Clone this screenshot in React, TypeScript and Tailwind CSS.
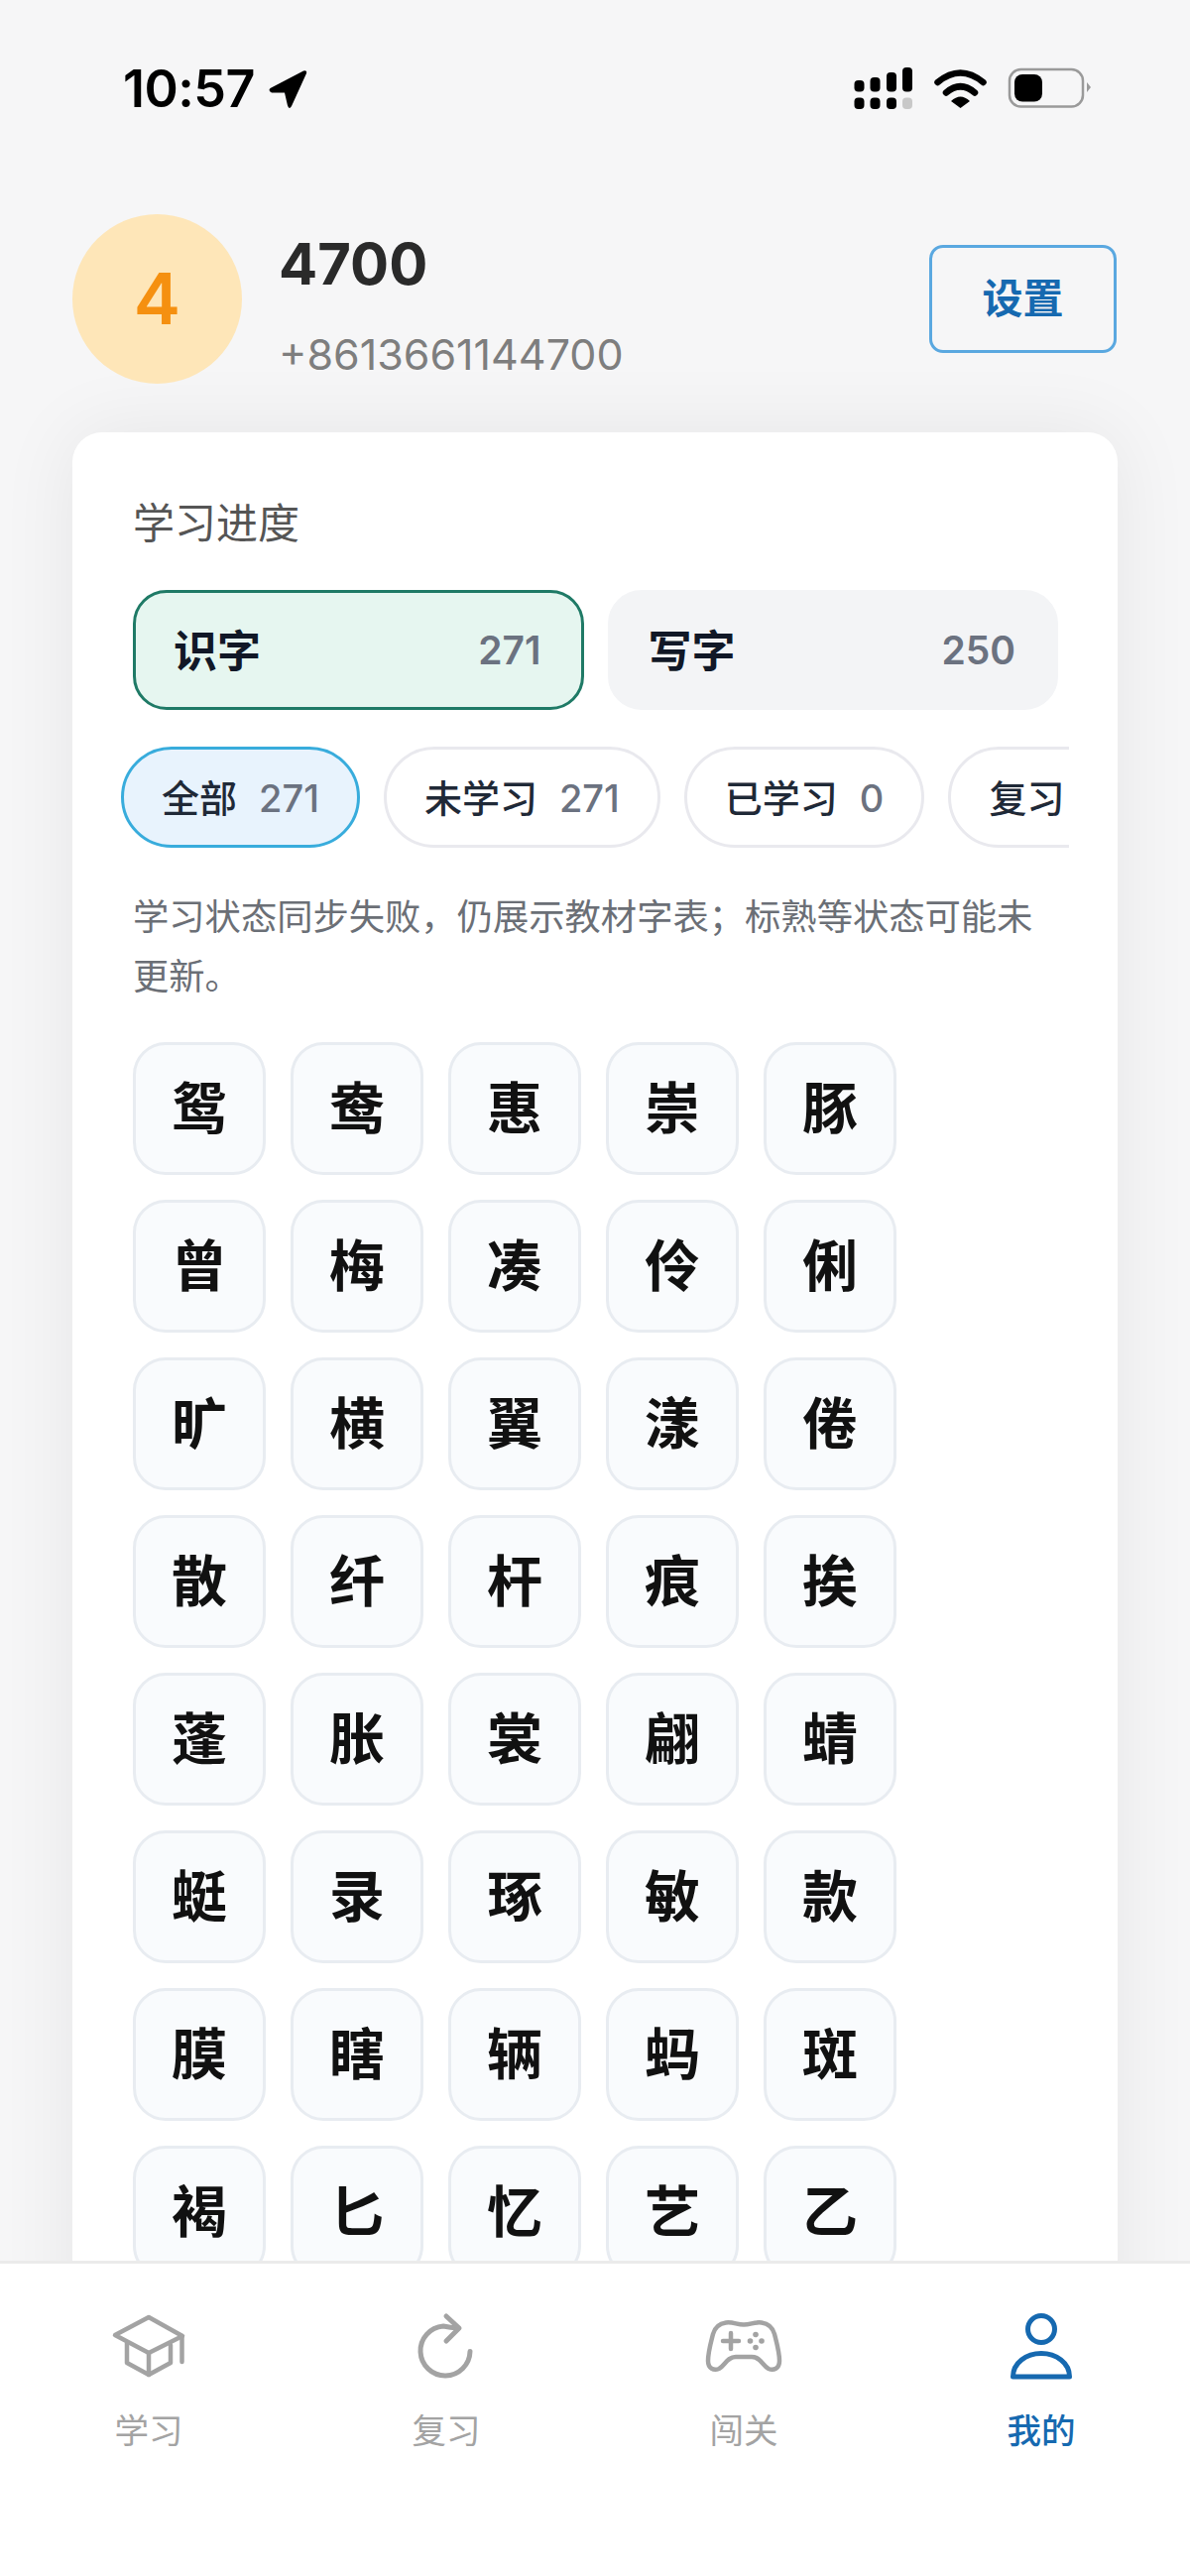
const FONT = "font-['Inter','Noto_Sans_CJK_SC',sans-serif]";

const ROWS = [
  ["鸳", "鸯", "惠", "崇", "豚"],
  ["曾", "梅", "凑", "伶", "俐"],
  ["旷", "横", "翼", "漾", "倦"],
  ["散", "纤", "杆", "痕", "挨"],
  ["蓬", "胀", "裳", "翩", "蜻"],
  ["蜓", "录", "琢", "敏", "款"],
  ["膜", "瞎", "辆", "蚂", "斑"],
  ["褐", "匕", "忆", "艺", "乙"],
];

function Signal() {
  const cols = [41.5, 57.5, 74, 90];
  const tops = [41, 38, 33, 28];
  return (
    <svg width="245" height="50" viewBox="40 25 245 50" aria-hidden="true">
      {cols.map((x, i) => (
        <g key={x}>
          <rect x={x} y={tops[i]} width="10" height={52.5 - tops[i]} rx="4" fill="#000" />
          <rect x={x} y="58.5" width="10" height="11.5" rx="4" fill={i === 3 ? "#c8c8c8" : "#000"} />
        </g>
      ))}
      <path d="M125.5 43 Q148.5 24 171.5 43" fill="none" stroke="#000" strokeWidth="6.5" strokeLinecap="round" />
      <path d="M134 53.5 Q148.5 41 163 53.5" fill="none" stroke="#000" strokeWidth="6.5" strokeLinecap="round" />
      <path d="M139 62 Q148.5 53 158 62 L148.5 69 Z" fill="#000" />
      <rect x="198" y="30" width="74" height="37.5" rx="11.5" fill="none" stroke="#9a9a9a" strokeWidth="2.5" />
      <rect x="203" y="35" width="28" height="27.5" rx="8" fill="#000" />
      <path d="M276 43 L280 48 L276 53 Z" fill="#9a9a9a" />
    </svg>
  );
}

function CapIcon() {
  return (
    <svg width="100" height="100" viewBox="0 0 100 100" fill="none" stroke="#a3a3a3" strokeWidth="4.5" strokeLinejoin="round" strokeLinecap="round" aria-hidden="true">
      <path d="M16 35 L50 17 L84 36 L50 53 Z" />
      <path d="M28 43 V63 L50 75 L72 63 V45" />
      <path d="M50 53 V75" />
      <path d="M83.5 37 V62" />
    </svg>
  );
}

function ReviewIcon() {
  return (
    <svg width="100" height="100" viewBox="0 0 100 100" fill="none" stroke="#a3a3a3" strokeWidth="5" strokeLinejoin="round" strokeLinecap="round" aria-hidden="true">
      <path d="M74 51.5 A25 25 0 1 1 47 26 Q54 27.5 62 28" />
      <path d="M50 16 L63 28 L50 41" />
    </svg>
  );
}

function PadIcon() {
  return (
    <svg width="100" height="100" viewBox="0 0 100 100" fill="none" stroke="#a3a3a3" strokeWidth="4.5" strokeLinejoin="round" strokeLinecap="round" aria-hidden="true">
      <path d="M32 22.5 C39 21.5 43 24.5 50 24.5 C57 24.5 61 21.5 68 22.5 C75 23.5 79 27 81 34 C83 42 86 52 86 61 C86 69 80 71 75 69 C69 66 67 57 58 57 H42 C33 57 31 66 25 69 C20 71 14 69 14 61 C14 52 17 42 19 34 C21 27 25 23.5 32 22.5 Z" />
      <path d="M29 41 H45 M37 33 V49" />
      <g fill="#a3a3a3" stroke="none">
        <circle cx="56.5" cy="41" r="2.8" />
        <circle cx="62" cy="34.5" r="2.8" />
        <circle cx="68" cy="41" r="2.8" />
        <circle cx="62" cy="47.5" r="2.8" />
      </g>
    </svg>
  );
}

function UserIcon() {
  return (
    <svg width="100" height="100" viewBox="0 0 100 100" fill="none" stroke="#1669b0" strokeWidth="5" strokeLinejoin="round" strokeLinecap="round" aria-hidden="true">
      <circle cx="50" cy="29" r="13.5" />
      <path d="M21.5 77 C21.5 63 35 53.5 50 53.5 C65 53.5 78.5 63 78.5 77 Z" />
    </svg>
  );
}

function Pill({ label, count, active }: { label: string; count?: string; active?: boolean }) {
  return (
    <div
      className={`h-[102px] shrink-0 rounded-[51px] border-[3px] pt-[2px] px-[38px] flex items-center gap-[22px] ${
        active ? "bg-[#e8f3fd] border-[#38acdc]" : "bg-white border-[#e9e9ee]"
      }`}
    >
      <span className="text-[38px] font-medium text-[#1f2937]">{label}</span>
      {count && <span className="text-[38px] font-medium text-[#6b7280]">{count}</span>}
    </div>
  );
}

function Tab({ label, count, active }: { label: string; count: string; active?: boolean }) {
  return (
    <div
      className={`flex-1 h-[121px] rounded-[34px] border-[3px] pt-[2px] pl-[38px] pr-[40px] flex items-center justify-between ${
        active ? "bg-[#e6f6f0] border-[#1f7a66]" : "bg-[#f3f4f6] border-[#f3f4f6]"
      }`}
    >
      <span className="text-[44px] font-bold text-[#111827]">{label}</span>
      <span className="text-[39px] font-semibold text-[#6b7280]">{count}</span>
    </div>
  );
}

function NavItem({ icon, label, active }: { icon: React.ReactNode; label: string; active?: boolean }) {
  return (
    <div className="flex flex-col items-center">
      {icon}
      <span className={`mt-[7px] text-[34.5px] leading-[50px] ${active ? "font-medium text-[#1669b0]" : "text-[#a3a3a3]"}`}>{label}</span>
    </div>
  );
}

export default function App() {
  return (
    <div className={`h-[2598px] w-[1200px] flex flex-col overflow-hidden bg-[#f6f6f7] ${FONT}`}>
      <div className="flex items-center justify-between pl-[124px] pr-[95px] pt-[60px] h-[120px] shrink-0">
        <div className="flex items-center gap-[13px]">
          <span className="text-[52px] leading-[60px] font-semibold text-black tracking-[-0.5px]">10:57</span>
          <svg width="40" height="40" viewBox="0 0 40 40" aria-hidden="true">
            <path d="M2.5 19 L36 1.5 Q40 0.5 39 4 L24 37 Q21.5 41 20 36.5 L17 23.5 L4 23.5 Q0 22 2.5 19 Z" fill="#000" />
          </svg>
        </div>
        <Signal />
      </div>

      <main className="flex-1 min-h-0 overflow-hidden pl-[73px] pr-[73px]">
        <div className="mt-[96px] mb-[49px] pr-[1px] flex items-center">
          <div className="w-[171px] h-[171px] rounded-full bg-[#fee6b8] flex items-center justify-center text-[71px] font-semibold text-[#f59010]">
            4
          </div>
          <div className="ml-[37px] flex-1 self-start pt-[15px]">
            <div className="text-[58px] leading-[70px] font-bold text-[#2a2a2a]">4700</div>
            <div className="mt-[26px] text-[43px] leading-[60px] text-[#7e7e7e]">+8613661144700</div>
          </div>
          <div className="w-[189px] h-[109px] rounded-[14px] border-[3px] border-[#5aa8e0] flex items-center justify-center text-[41px] font-semibold text-[#1669b0]">
            设置
          </div>
        </div>

        <section className="rounded-t-[30px] bg-white pl-[61px] pr-[60px] pt-[62px] pb-[60px] shadow-[0_0_80px_rgba(0,0,0,0.07)]">
          <h2 className="text-[42px] leading-[60px] font-normal text-[#555555]">学习进度</h2>
          <div className="mt-[37px] flex gap-[24px]">
            <Tab label="识字" count="271" active />
            <Tab label="写字" count="250" />
          </div>
          <div className="mt-[37px] ml-[-12px] mr-[-11px] flex gap-[24px] overflow-hidden">
            <Pill label="全部" count="271" active />
            <Pill label="未学习" count="271" />
            <Pill label="已学习" count="0" />
            <Pill label="复习" count="0" />
          </div>
          <p className="mt-[40px] text-[36.3px] leading-[60px] text-[#6b6f76]">
            学习状态同步失败，仍展示教材字表；标熟等状态可能未更新。
          </p>
          <div className="mt-[36px] grid grid-cols-[repeat(5,134px)] gap-[25px]">
            {ROWS.flat().map((c) => (
              <div
                key={c}
                className="h-[134px] rounded-[33px] border-[3px] border-[#e8ecf1] bg-[#f9fbfd] flex items-center justify-center text-[56px] font-bold text-[#111111]"
              >
                {c}
              </div>
            ))}
          </div>
        </section>
      </main>

      <nav className="h-[318px] shrink-0 bg-white border-t-[3px] border-[#ebebeb] pt-[37px] grid grid-cols-4 content-start">
        <NavItem icon={<CapIcon />} label="学习" />
        <NavItem icon={<ReviewIcon />} label="复习" />
        <NavItem icon={<PadIcon />} label="闯关" />
        <NavItem icon={<UserIcon />} label="我的" active />
      </nav>
    </div>
  );
}
